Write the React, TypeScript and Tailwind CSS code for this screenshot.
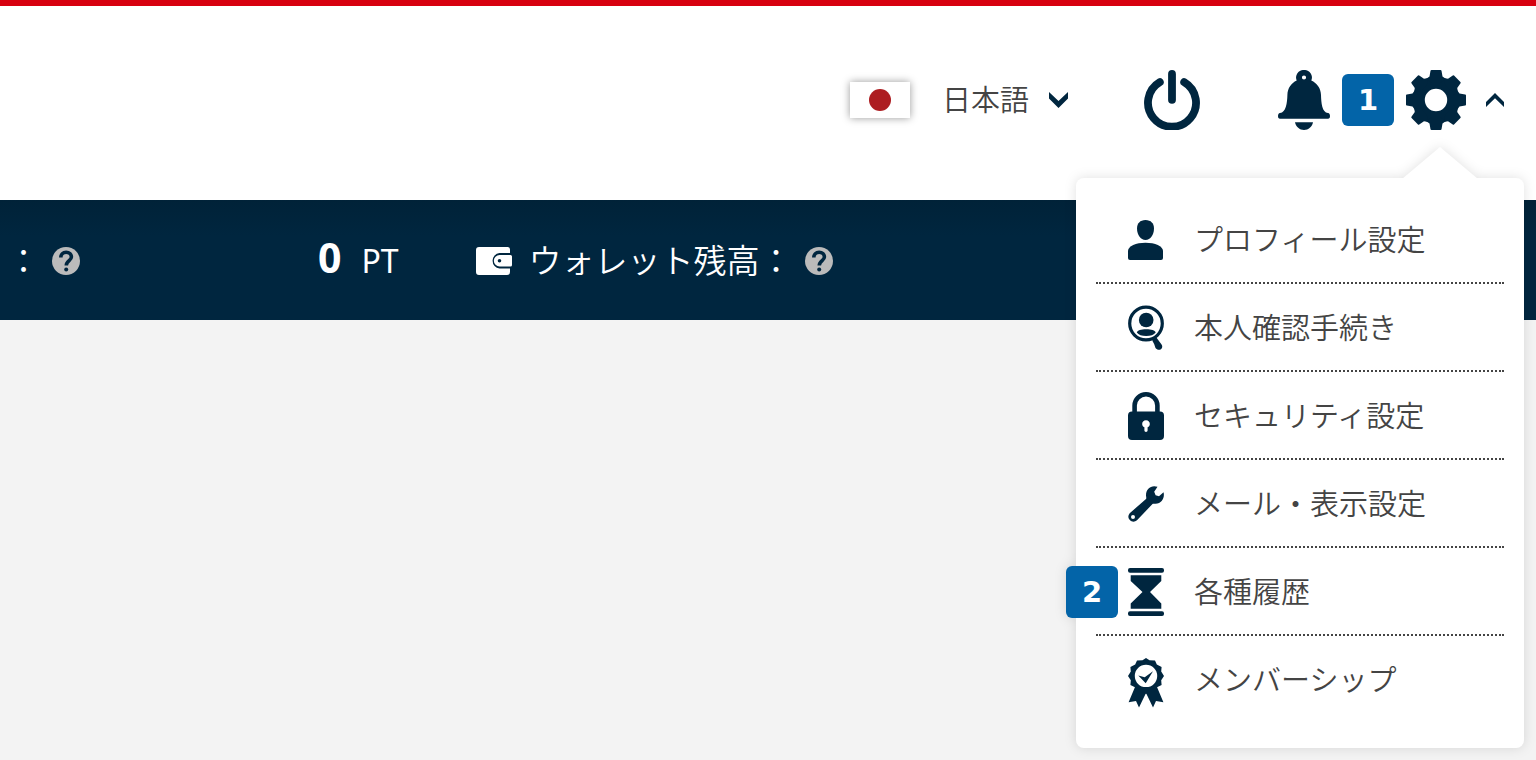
import type { ReactNode } from "react";

const ChevronDown = () => (
  <svg width="19" height="16" viewBox="0 0 18 15" fill="#00263f" aria-hidden="true">
    <path d="M0 0L9 8.5L18 0V6L9 15L0 6Z" />
  </svg>
);

const ChevronUp = () => (
  <svg width="18" height="14" viewBox="0 0 18 14" fill="#00263f" aria-hidden="true">
    <path d="M9 0L18 9V14L9 5.2L0 14V9Z" />
  </svg>
);

const PowerIcon = () => (
  <svg
    width="56"
    height="60"
    viewBox="0 0 56 60"
    fill="none"
    stroke="#00263f"
    strokeWidth="7.8"
    strokeLinecap="round"
    aria-hidden="true"
  >
    <path d="M15.8 12.1A24 24 0 1 0 40.2 12.1" />
    <path d="M28 4V29.8" />
  </svg>
);

const BellIcon = () => (
  <svg width="52" height="60" viewBox="0 0 52 60" fill="#00263f" aria-hidden="true">
    <path
      fillRule="evenodd"
      d="M26 0A7.4 7.4 0 0 1 33.3 10.4C39 13 42.8 18 43 25C43.2 33 44 42.5 50 43C51.4 43.2 52 44.4 52 46C52 47.8 51.4 48.8 50 48.8H2C.6 48.8 0 47.8 0 46C0 44.4.6 43.2 2 43C8 42.5 9.2 33 9.4 25C9.6 18 13.2 13 18.7 10.4A7.4 7.4 0 0 1 26 0ZM26 5.4A2.1 2.1 0 1 0 26 9.6A2.1 2.1 0 1 0 26 5.4Z"
    />
    <path d="M17 52.3H35C34 57 30.5 60 26 60S18 57 17 52.3Z" />
  </svg>
);

const GearIcon = () => (
  <svg width="60" height="60" viewBox="-30 -30 60 60" fill="#00263f" aria-hidden="true">
    <circle r="17" fill="none" stroke="#00263f" strokeWidth="11.6" />
    {[0, 45, 90, 135, 180, 225, 270, 315].map((angle) => (
      <path
        key={angle}
        transform={`rotate(${angle})`}
        d="M-4.5 -30H4.5Q5.3 -30 5.5 -29.2L6.5 -23.5L10 -21L4 -17H-4L-10 -21L-6.5 -23.5L-5.5 -29.2Q-5.3 -30 -4.5 -30Z"
      />
    ))}
  </svg>
);

const HelpIcon = () => (
  <svg width="28" height="28" viewBox="0 0 28 28" aria-hidden="true">
    <circle cx="14" cy="14" r="14" fill="#bbb" />
    <path
      d="M8.8 10.6C8.8 7.2 11 5.3 14.1 5.3C17.3 5.3 19.4 7.3 19.4 10C19.4 13.6 14.3 13.6 14.3 18.4"
      fill="none"
      stroke="#00263f"
      strokeWidth="3.6"
    />
    <circle cx="14.2" cy="22.6" r="2" fill="#00263f" />
  </svg>
);

const WalletIcon = () => (
  <svg width="36" height="28" viewBox="0 0 36 28" fill="#fff" aria-hidden="true">
    <path d="M3 0H31.5Q34 0 34 2.5V6H23.5A7.8 7.8 0 0 0 23.5 21.5H34V25Q34 28 31 28H3Q0 28 0 25V3Q0 0 3 0Z" />
    <path
      fillRule="evenodd"
      d="M23.6 8H34.5Q36 8 36 9.5V18Q36 19.5 34.5 19.5H23.6A5.75 5.75 0 0 1 23.6 8ZM23.5 11.9A1.8 1.8 0 1 0 23.5 15.5A1.8 1.8 0 1 0 23.5 11.9Z"
    />
  </svg>
);

const ProfileIcon = () => (
  <svg width="36" height="40" viewBox="0 0 36 40" fill="#00263f" aria-hidden="true">
    <path d="M17.5 0C23 0 26 3.5 26 8.5C26 14.5 22.5 20 17.5 20S9 14.5 9 8.5C9 3.5 12 0 17.5 0Z" />
    <path d="M0 31C0 26 8 22.7 17.5 22.7S35 26 35 31V38Q35 40 33 40H2Q0 40 0 38Z" />
  </svg>
);

const IdentityIcon = () => (
  <svg width="36" height="46" viewBox="0 0 36 46" fill="#00263f" aria-hidden="true">
    <circle cx="18" cy="18.5" r="16.3" fill="none" stroke="#00263f" strokeWidth="3.2" />
    <circle cx="18.2" cy="15" r="7.3" />
    <path d="M8.8 27.5C9.5 25 13 24.2 18.2 24.2S27 25 27.7 27.5C26 30 22.5 31 18.2 31S10.5 30 8.8 27.5Z" />
    <path d="M24.5 33.5L28 32L33.4 39.3C36.5 43.5 30.500 47 27.500 43Q26 38 24.500 36Z" />
  </svg>
);

const LockIcon = () => (
  <svg width="36" height="48" viewBox="0 0 36 48" fill="#00263f" aria-hidden="true">
    <path d="M6.6 21V13.5A11.4 11.2 0 0 1 29.4 13.5V21" fill="none" stroke="#00263f" strokeWidth="4.6" />
    <path
      fillRule="evenodd"
      d="M4 19.5H32Q36 19.5 36 23.5V44Q36 48 32 48H4Q0 48 0 44V23.5Q0 19.5 4 19.5ZM18 28.3C13.5 28.3 13 34 16.4 35.2V38.6Q16.4 40 18 40T19.6 38.6V35.2C23 34 22.5 28.3 18 28.3Z"
    />
  </svg>
);

const WrenchIcon = () => (
  <svg width="36" height="36" viewBox="0 0 36 36" fill="#00263f" aria-hidden="true">
    <path
      fillRule="evenodd"
      d="M29.5 .8L26.2 5.8L27.6 9.3L31 10.2L35.5 6.2C37 11 34 17.8 27.5 17.8C26 17.8 25.3 17.3 24.5 18L9 34.3C4 38.5 -2.5 32 1.7 27.3L18 13C18.7 12.3 18 11 18 9.3C18 2.5 23.5 -1.3 29.5 .8ZM5 28.9A2 2 0 1 0 5 32.9A2 2 0 1 0 5 28.9Z"
    />
  </svg>
);

const HourglassIcon = () => (
  <svg width="36" height="48" viewBox="0 0 36 48" fill="#00263f" aria-hidden="true">
    <rect width="36" height="4.7" rx="2" />
    <rect y="43.3" width="36" height="4.7" rx="2" />
    <path d="M2.7 7.3H33.3V13L22 24L33.3 35.5V40.7H2.7V35.5L14.5 24L2.7 13Z" />
  </svg>
);

const MembershipIcon = () => (
  <svg width="36" height="55" viewBox="0 -5 36 55" fill="#00263f" aria-hidden="true">
    <path d="M7 29L.6 44.2L8 43L11 49.5L18 35L25 49.5L28 43L35.4 44.2L29 29Z" />
    <path
      fillRule="evenodd"
      d="M18 0L21.5 2.3L27 2.4L28.8 6.6L33.6 9L33.2 13.5L36 18L33.2 22.3L33.6 27L29 29.3L27 33.6L22.2 33.4L18 36L13.8 33.4L9 33.6L7 29.3L2.4 27L2.8 22.3L0 18L2.8 13.5L2.4 9L7.2 6.6L9 2.4L14.5 2.3ZM18 6.8A11.2 11.2 0 1 0 18 29.2A11.2 11.2 0 1 0 18 6.8Z"
    />
    <path d="M10.3 17.6L16.7 19.3L25 13.2L17.7 25.3Z" />
  </svg>
);

const StepBadge = ({ children }: { children: ReactNode }) => (
  <span className="flex h-[52px] w-[52px] items-center justify-center rounded-md bg-[#0364a8] font-['DejaVu_Sans',sans-serif] text-[29px] leading-none font-bold text-white">
    {children}
  </span>
);

const menuItems = [
  { label: "プロフィール設定", icon: <ProfileIcon /> },
  { label: "本人確認手続き", icon: <IdentityIcon /> },
  { label: "セキュリティ設定", icon: <LockIcon /> },
  { label: "メール・表示設定", icon: <WrenchIcon /> },
  { label: "各種履歴", icon: <HourglassIcon />, step: 2 },
  { label: "メンバーシップ", icon: <MembershipIcon /> },
];

const SettingsMenu = () => (
  <nav
    aria-label="設定"
    className="absolute top-full -right-5 z-10 mt-12 w-[448px] rounded-lg bg-white px-5 pt-[18px] pb-6 drop-shadow-[0_0_6px_rgba(0,0,0,0.12)]"
  >
    {/* Pointer towards the gear */}
    <svg className="absolute -top-[31px] right-[46px]" width="76" height="32" viewBox="0 0 76 32" fill="#fff" aria-hidden="true">
      <path d="M38 0L76 32H0Z" />
    </svg>
    <ul>
      {menuItems.map((item) => (
        <li
          key={item.label}
          className="relative h-[88px] border-b-2 border-dotted border-[#444] last:border-transparent"
        >
          {item.step && (
            <span className="absolute top-[18px] -left-[30px]">
              <StepBadge>{item.step}</StepBadge>
            </span>
          )}
          <a href="#" className="flex h-full items-center gap-[30px] pt-0.5 pl-8">
            {item.icon}
            <span className="pb-1 text-[29px] leading-10 whitespace-nowrap text-[#444]">{item.label}</span>
          </a>
        </li>
      ))}
    </ul>
  </nav>
);

const Header = () => (
  <header className="flex h-[200px] items-center justify-end border-t-6 border-[#d7000f] bg-white pr-8 pb-1.5">
    <button type="button" className="flex items-center">
      <span className="flex h-9 w-[60px] items-center justify-center bg-white shadow-[0_0_8px_rgba(0,0,0,0.4)]">
        <span className="h-[22px] w-[22px] rounded-full bg-[#ad1d21]" />
      </span>
      <span className="ml-8 pb-1 text-[29px] leading-10 text-[#444]">日本語</span>
      <span className="ml-5">
        <ChevronDown />
      </span>
    </button>
    <button type="button" aria-label="ログアウト" className="ml-[76px]">
      <PowerIcon />
    </button>
    <div className="relative ml-[78px] flex items-center gap-3">
      <button type="button" aria-label="お知らせ">
        <BellIcon />
      </button>
      <StepBadge>1</StepBadge>
      <button type="button" aria-label="設定" aria-expanded="true" className="flex items-center gap-5">
        <GearIcon />
        <ChevronUp />
      </button>
      <SettingsMenu />
    </div>
  </header>
);

const BalanceBar = () => (
  <section className="flex h-[120px] items-center bg-[#00263f] bg-linear-to-b from-[#002238] to-[#00263f] to-30% pt-0.5 pl-[7px] text-[33px] leading-10 whitespace-nowrap text-white">
    <span className="pb-1">：</span>
    <button type="button" aria-label="ヘルプ" className="ml-3">
      <HelpIcon />
    </button>
    <p className="ml-[238px] flex items-baseline gap-5 pb-1 font-['Noto_Sans',sans-serif] font-normal">
      <span className="text-[41px] font-bold">0</span>
      <span className="text-[32px]">PT</span>
    </p>
    <span className="ml-[77px]">
      <WalletIcon />
    </span>
    <span className="ml-[17px] pb-1">ウォレット残高：</span>
    <button type="button" aria-label="ヘルプ" className="ml-3">
      <HelpIcon />
    </button>
  </section>
);

const App = () => (
  <div className="min-h-screen bg-[#f3f3f3] font-['Noto_Sans_CJK_JP',sans-serif] font-[350]">
    <Header />
    <main>
      <BalanceBar />
    </main>
  </div>
);

export default App;
